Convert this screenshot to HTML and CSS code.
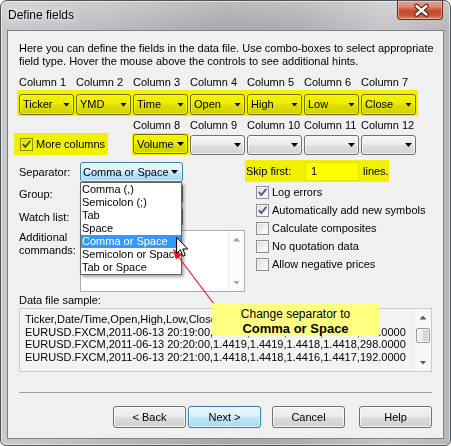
FILE: index.html
```html
<!DOCTYPE html>
<html>
<head>
<meta charset="utf-8">
<title>Define fields</title>
<link rel="stylesheet" href="styles.css">
</head>
<body>
<div class="window">
  <div class="titlebar">
    <span class="title">Define fields</span>
    <div class="close">
      <svg width="46" height="19" viewBox="0 0 46 19"><path d="M18.5 5 L28.5 13.5 M28.5 5 L18.5 13.5" stroke="#5a1a0c" stroke-width="4.6" stroke-linecap="round"/><path d="M18.5 5 L28.5 13.5 M28.5 5 L18.5 13.5" stroke="#fff" stroke-width="2.4" stroke-linecap="round"/></svg>
    </div>
  </div>
  <div class="client">
    <p class="intro">Here you can define the fields in the data file. Use combo-boxes to select appropriate<br>field type. Hover the mouse above the controls to see additional hints.</p>

    <div class="cols labels">
      <span>Column 1</span><span>Column 2</span><span>Column 3</span><span>Column 4</span><span>Column 5</span><span>Column 6</span><span>Column 7</span>
    </div>

    <div class="hl row1">
      <div class="cols">
        <div class="combo">Ticker</div>
        <div class="combo">YMD</div>
        <div class="combo">Time</div>
        <div class="combo">Open</div>
        <div class="combo">High</div>
        <div class="combo">Low</div>
        <div class="combo">Close</div>
      </div>
    </div>

    <div class="cols row2">
      <label class="hl more"><span class="cb"><svg width="11" height="11" viewBox="0 0 11 11"><path d="M1.8 5.2 L4.3 8 L9.3 1.8" fill="none" stroke="#4b5d8c" stroke-width="1.9"/></svg></span>More columns</label>
      <span class="lbl c3">Column 8</span>
      <span class="lbl c4">Column 9</span>
      <span class="lbl c5">Column 10</span>
      <span class="lbl c6">Column 11</span>
      <span class="lbl c7">Column 12</span>
      <div class="hl vol c3"><div class="combo">Volume</div></div>
      <div class="combo cc c4"></div>
      <div class="combo cc c5"></div>
      <div class="combo cc c6"></div>
      <div class="combo cc c7"></div>
    </div>

    <div class="lower">
      <div class="form">
        <span class="flabel">Separator:</span>
        <div class="combo open">Comma or Space</div>
        <span class="flabel">Group:</span>
        <div class="combo"></div>
        <span class="flabel">Watch list:</span>
        <div class="combo"></div>
        <span class="flabel top">Additional<br>commands:</span>
        <div class="ta">
          <div class="vscroll light">
            <span class="abtn"><i class="tri up"></i></span>
            <span class="track"></span>
            <span class="abtn"><i class="tri down"></i></span>
          </div>
        </div>
      </div>
      <div class="opts">
        <div class="hl skip">
          <span class="skiplbl">Skip first:</span>
          <span class="edit">1</span>
          <span class="lines">lines.</span>
        </div>
        <ul class="checks">
          <li><span class="cb"><svg width="11" height="11" viewBox="0 0 11 11"><path d="M1.8 5.2 L4.3 8 L9.3 1.8" fill="none" stroke="#4b5d8c" stroke-width="1.9"/></svg></span>Log errors</li>
          <li><span class="cb"><svg width="11" height="11" viewBox="0 0 11 11"><path d="M1.8 5.2 L4.3 8 L9.3 1.8" fill="none" stroke="#4b5d8c" stroke-width="1.9"/></svg></span>Automatically add new symbols</li>
          <li><span class="cb"></span>Calculate composites</li>
          <li><span class="cb"></span>No quotation data</li>
          <li><span class="cb"></span>Allow negative prices</li>
        </ul>
      </div>
    </div>

    <div class="slabel">Data file sample:</div>
    <div class="sample">
      <pre class="stext">Ticker,Date/Time,Open,High,Low,Close,Volume
EURUSD.FXCM,2011-06-13 20:19:00,1.4418,1.4419,1.4418,1.4419,316.0000
EURUSD.FXCM,2011-06-13 20:20:00,1.4419,1.4419,1.4418,1.4418,298.0000
EURUSD.FXCM,2011-06-13 20:21:00,1.4418,1.4418,1.4416,1.4417,192.0000</pre>
      <div class="vscroll">
        <span class="abtn"><i class="tri up dark"></i></span>
        <span class="thumb"></span>
        <span class="track"></span>
        <span class="abtn"><i class="tri down dark"></i></span>
      </div>
    </div>

    <div class="sep"></div>

    <div class="buttons">
      <button class="btn back">&lt; Back</button>
      <button class="btn default">Next &gt;</button>
      <button class="btn cancel">Cancel</button>
      <button class="btn">Help</button>
    </div>
  </div>

  <ul class="dropdown">
    <li>Comma (,)</li>
    <li>Semicolon (;)</li>
    <li>Tab</li>
    <li>Space</li>
    <li class="sel">Comma or Space</li>
    <li>Semicolon or Space</li>
    <li>Tab or Space</li>
  </ul>

  <svg class="arrow" width="451" height="446" viewBox="0 0 451 446">
    <line x1="214" y1="304" x2="177" y2="255" stroke="#ff1010" stroke-width="1.2"/>
    <polygon points="173,249 182.2,254.5 175.9,259.4" fill="#ff1010"/>
  </svg>

  <svg class="cursor" width="13" height="21" viewBox="0 0 13 21">
    <path d="M0.5 0.5 L0.5 16.5 L4.3 12.8 L7 19.2 L9.3 18.2 L6.7 12 L11.8 12 Z" fill="#fff" stroke="#000" stroke-width="1" stroke-linejoin="miter"/>
  </svg>

  <div class="callout">
    <span class="cl1">Change separator to</span>
    <span class="cl2">Comma or Space</span>
  </div>
</div>
</body>
</html>
```

FILE: styles.css
```css
* { box-sizing: border-box; }
html, body { margin: 0; padding: 0; }
body {
  width: 451px;
  height: 446px;
  overflow: hidden;
  background: #ffffff;
  font-family: "Liberation Sans", Arial, sans-serif;
  font-size: 11px;
  color: #000;
}

.window {
  position: relative;
  width: 451px;
  height: 446px;
  border: 1px solid #505357;
  border-radius: 7px 7px 6px 6px;
  background:
    linear-gradient(to bottom, rgba(255,255,255,0.25), rgba(255,255,255,0) 30px),
    linear-gradient(to right, #cacaca 0%, #bcbcbc 22%, #a7a7a7 50%, #adadad 66%, #c6c6c6 86%, #b6b6b6 100%);
  padding: 0 6px 6px 6px;
  display: flex;
  flex-direction: column;
  box-shadow: inset 0 0 0 1px rgba(255,255,255,0.55);
}

.titlebar {
  height: 29px;
  display: flex;
  align-items: flex-start;
  flex: none;
}
.title {
  font-size: 12px;
  line-height: 14px;
  margin: 7px 0 0 1px;
  text-shadow: 0 0 5px #fff, 0 0 9px rgba(255,255,255,0.9);
}
.close {
  margin-left: auto;
  margin-right: 1px;
  width: 46px;
  height: 19px;
  border: 1px solid #6b2a1c;
  border-top: none;
  border-radius: 0 0 4px 4px;
  background: linear-gradient(to bottom, #e8a593 0%, #d9826b 35%, #c6472c 55%, #c9553a 80%, #dc8a6e 100%);
  box-shadow: inset 0 0 0 1px rgba(255,220,200,0.45);
}
.close svg { display: block; }

.client {
  flex: 1;
  background: #f0f0f0;
  border: 1px solid #7c8289;
  padding: 11px 11px 0 11px;
  line-height: 13px;
}

.intro { margin: 0; line-height: 13px; white-space: nowrap; }

.cols {
  display: grid;
  grid-template-columns: repeat(7, 55px);
  column-gap: 2px;
}
.labels { margin-top: 8px; white-space: nowrap; }

/* yellow highlight marker: multiplies the underlying pixels with yellow */
.hl { position: relative; }
.hl::after {
  content: "";
  position: absolute;
  inset: 0;
  background: #ffff00;
  mix-blend-mode: multiply;
  pointer-events: none;
}
.row1 {
  width: fit-content;
  margin: 1px 0 0 -2px;
  padding: 4px 2px 1px 2px;
}
.row1 .combo { height: 21px; }

.combo {
  height: 20px;
  display: flex;
  align-items: center;
  justify-content: space-between;
  padding: 0 3px 0 3px;
  border: 1px solid #707070;
  border-radius: 3px;
  background: linear-gradient(to bottom, #f3f3f3 0%, #ececec 48%, #dfdfdf 52%, #d2d2d2 100%);
  box-shadow: inset 0 0 0 1px rgba(255,255,255,0.65);
  white-space: nowrap;
  overflow: hidden;
}
.combo::after {
  content: "";
  flex: none;
  width: 7px;
  height: 4px;
  margin-left: auto;
  background: #000;
  clip-path: polygon(0 0, 100% 0, 50% 100%);
}

.row2 {
  margin-top: 3px;
  grid-template-rows: 13px 20px;
  row-gap: 3px;
}
.lbl { grid-row: 1; white-space: nowrap; }
.c3 { grid-column: 3; }
.c4 { grid-column: 4; }
.c5 { grid-column: 5; }
.c6 { grid-column: 6; }
.c7 { grid-column: 7; }
.row2 .cc, .row2 .vol { grid-row: 2; }
.vol { margin: -2px -1px 0 -1px; padding: 1px; height: 22px; }
.more {
  grid-column: 1 / 3;
  grid-row: 2;
  justify-self: start;
  display: flex;
  align-items: center;
  gap: 3px;
  height: 22px;
  margin: -2px 0 0 -5px;
  padding: 1px 3px 0 6px;
  white-space: nowrap;
}

.cb {
  flex: none;
  width: 13px;
  height: 13px;
  border: 1px solid #8e8f8f;
  background: linear-gradient(135deg, #d9dadc 0%, #f2f2f2 60%, #ffffff 100%);
  box-shadow: inset 0 0 0 1px #f4f4f4;
  display: flex;
  align-items: center;
  justify-content: center;
}
.cb svg { display: block; }

.lower {
  display: flex;
  margin-top: 5px;
}
.form {
  width: 226px;
  flex: none;
  padding-top: 2px;
  display: grid;
  grid-template-columns: 61px 165px;
  grid-template-rows: 20px 21px 21px 62px;
  row-gap: 2px;
}
.flabel { align-self: center; white-space: nowrap; }
.flabel.top { align-self: start; padding-top: 1px; }
.form .combo { width: 103px; }
.combo.open {
  border-color: #3c7fb1;
  background: linear-gradient(to bottom, #eaf6fd 0%, #d9f0fc 48%, #bee6fd 52%, #a7d9f5 100%);
  padding-left: 2px;
  padding-right: 4px;
}
.ta {
  border: 1px solid #abadb3;
  background: #fff;
  display: flex;
  justify-content: flex-end;
}

.vscroll {
  width: 17px;
  flex: none;
  display: flex;
  flex-direction: column;
  background: #fbfbfb;
  border-left: 1px solid #f0f0f0;
}
.vscroll.light { width: 16px; }
.abtn {
  height: 17px;
  flex: none;
  display: flex;
  align-items: center;
  justify-content: center;
}
.track { flex: 1; }
.tri {
  display: block;
  width: 7px;
  height: 4px;
  background: #a3a3a3;
}
.tri.dark { background: #5a5a5a; }
.tri.up { clip-path: polygon(50% 0, 100% 100%, 0 100%); }
.tri.down { clip-path: polygon(0 0, 100% 0, 50% 100%); }
.thumb {
  flex: none;
  height: 15px;
  margin: 2px 1px 0 1px;
  border: 1px solid #989898;
  border-radius: 2px;
  background: linear-gradient(to right, #f4f4f4 0%, #e9e9e9 50%, #dadada 51%, #d2d2d2 100%);
  box-shadow: inset 0 0 0 1px rgba(255,255,255,0.7);
}

.opts { flex: 1; }
.skip {
  width: 144px;
  height: 22px;
  display: flex;
  align-items: center;
  padding-left: 1px;
  white-space: nowrap;
}
.skiplbl { width: 59px; flex: none; }
.edit {
  width: 54px;
  height: 19px;
  flex: none;
  background: #fff;
  border: 1px solid #e2e3ea;
  padding-left: 5px;
  display: flex;
  align-items: center;
}
.lines { margin-left: 4px; }

.checks {
  list-style: none;
  margin: 1px 0 0 0;
  padding: 0 0 0 11px;
}
.checks li {
  height: 18px;
  display: flex;
  align-items: center;
  gap: 3px;
  white-space: nowrap;
}

.slabel { margin-top: 2px; }
.sample {
  margin-top: 1px;
  height: 64px;
  border: 1px solid #c9cacc;
  background: #f3f3f3;
  display: flex;
}
.stext {
  flex: 1;
  margin: 0;
  padding: 4px 0 0 5px;
  font-family: "Liberation Sans", Arial, sans-serif;
  font-size: 11px;
  line-height: 12.6px;
  overflow: hidden;
  white-space: pre;
}
.sample .vscroll { background: #f7f7f7; }

.sep {
  margin-top: 20px;
  height: 1px;
  background: #a0a0a0;
}

.buttons {
  margin-top: 13px;
  display: flex;
  justify-content: flex-end;
}
.btn {
  width: 73px;
  height: 22px;
  padding: 0;
  border: 1px solid #707070;
  border-radius: 3px;
  background: linear-gradient(to bottom, #f2f2f2 0%, #ebebeb 48%, #dddddd 52%, #cfcfcf 100%);
  box-shadow: inset 0 0 0 1px rgba(255,255,255,0.7);
  font-family: "Liberation Sans", Arial, sans-serif;
  font-size: 11px;
  color: #000;
}
.btn.back { margin-right: 2px; }
.btn.default {
  margin-right: 11px;
  border-color: #3c7fb1;
  background: linear-gradient(to bottom, #eaf6fd 0%, #d9f0fc 48%, #bee6fd 52%, #a7d9f5 100%);
  box-shadow: inset 0 0 0 1px rgba(255,255,255,0.6), 0 0 1px #5aa9de;
}
.btn.cancel { margin-right: 14px; }

/* overlays */
.dropdown {
  position: absolute;
  left: 79px;
  top: 181px;
  width: 102px;
  height: 93px;
  margin: 0;
  padding: 0;
  list-style: none;
  background: #fff;
  border: 1px solid #646464;
  box-shadow: 2px 2px 3px rgba(0,0,0,0.35);
}
.dropdown li {
  height: 13px;
  line-height: 13px;
  padding-left: 1px;
  white-space: nowrap;
}
.dropdown li.sel { background: #3399ff; color: #fff; }

.arrow {
  position: absolute;
  left: -1px;
  top: -1px;
  pointer-events: none;
}
.cursor {
  position: absolute;
  left: 175px;
  top: 236px;
}
.callout {
  position: absolute;
  left: 211px;
  top: 302px;
  width: 167px;
  height: 33px;
  background: #ffff80;
  text-align: center;
  font-family: "Liberation Sans", Arial, sans-serif;
  padding-top: 4px;
}
.cl1 { display: block; font-size: 12px; line-height: 14px; height: 14px; }
.cl2 { display: block; font-size: 13px; font-weight: bold; line-height: 15px; height: 15px; }
```
